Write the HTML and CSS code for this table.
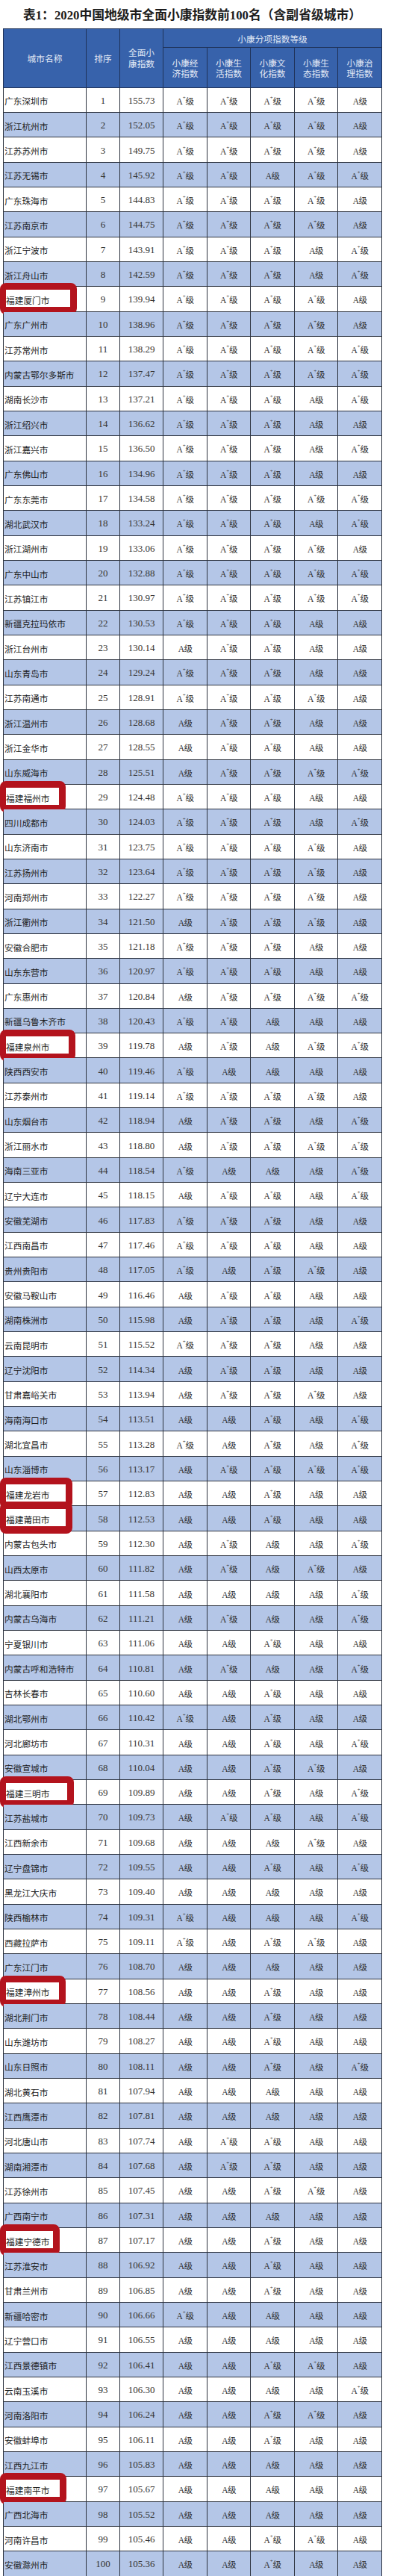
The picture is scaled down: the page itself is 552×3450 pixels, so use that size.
FILE: index.html
```html
<!DOCTYPE html>
<html lang="zh-CN">
<head>
<meta charset="utf-8">
<title>2020中国地级市全面小康指数前100名</title>
<link rel="stylesheet" href="styles.css">
</head>
<body>
<h1 class="title">表1：2020中国地级市全面小康指数前100名（含副省级城市）</h1>
<table class="rank">
<colgroup><col class="c1"><col class="c2"><col class="c3"><col class="cg"><col class="cg2"><col class="cg"><col class="cg2"><col class="cg"></colgroup>
<thead>
<tr class="h1"><th rowspan="2">城市名称</th><th rowspan="2">排序</th><th rowspan="2">全面小<br>康指数</th><th colspan="5">小康分项指数等级</th></tr>
<tr class="h2"><th>小康经<br>济指数</th><th>小康生<br>活指数</th><th>小康文<br>化指数</th><th>小康生<br>态指数</th><th>小康治<br>理指数</th></tr>
</thead>
<tbody>
<tr><td class="n">广东深圳市</td><td>1</td><td>155.73</td><td>A<sup>+</sup>级</td><td>A<sup>+</sup>级</td><td>A<sup>+</sup>级</td><td>A<sup>+</sup>级</td><td>A级</td></tr>
<tr><td class="n">浙江杭州市</td><td>2</td><td>152.05</td><td>A<sup>+</sup>级</td><td>A<sup>+</sup>级</td><td>A<sup>+</sup>级</td><td>A<sup>+</sup>级</td><td>A级</td></tr>
<tr><td class="n">江苏苏州市</td><td>3</td><td>149.75</td><td>A<sup>+</sup>级</td><td>A<sup>+</sup>级</td><td>A<sup>+</sup>级</td><td>A<sup>+</sup>级</td><td>A级</td></tr>
<tr><td class="n">江苏无锡市</td><td>4</td><td>145.92</td><td>A<sup>+</sup>级</td><td>A<sup>+</sup>级</td><td>A级</td><td>A<sup>+</sup>级</td><td>A<sup>+</sup>级</td></tr>
<tr><td class="n">广东珠海市</td><td>5</td><td>144.83</td><td>A<sup>+</sup>级</td><td>A<sup>+</sup>级</td><td>A<sup>+</sup>级</td><td>A<sup>+</sup>级</td><td>A级</td></tr>
<tr><td class="n">江苏南京市</td><td>6</td><td>144.75</td><td>A<sup>+</sup>级</td><td>A<sup>+</sup>级</td><td>A<sup>+</sup>级</td><td>A<sup>+</sup>级</td><td>A级</td></tr>
<tr><td class="n">浙江宁波市</td><td>7</td><td>143.91</td><td>A<sup>+</sup>级</td><td>A<sup>+</sup>级</td><td>A<sup>+</sup>级</td><td>A级</td><td>A<sup>+</sup>级</td></tr>
<tr><td class="n">浙江舟山市</td><td>8</td><td>142.59</td><td>A<sup>+</sup>级</td><td>A<sup>+</sup>级</td><td>A<sup>+</sup>级</td><td>A级</td><td>A<sup>+</sup>级</td></tr>
<tr><td class="n"><span class="hl w103"></span><span class="t">福建厦门市</span></td><td>9</td><td>139.94</td><td>A<sup>+</sup>级</td><td>A<sup>+</sup>级</td><td>A<sup>+</sup>级</td><td>A<sup>+</sup>级</td><td>A级</td></tr>
<tr><td class="n">广东广州市</td><td>10</td><td>138.96</td><td>A<sup>+</sup>级</td><td>A<sup>+</sup>级</td><td>A<sup>+</sup>级</td><td>A<sup>+</sup>级</td><td>A级</td></tr>
<tr><td class="n">江苏常州市</td><td>11</td><td>138.29</td><td>A<sup>+</sup>级</td><td>A<sup>+</sup>级</td><td>A<sup>+</sup>级</td><td>A<sup>+</sup>级</td><td>A<sup>+</sup>级</td></tr>
<tr><td class="n">内蒙古鄂尔多斯市</td><td>12</td><td>137.47</td><td>A<sup>+</sup>级</td><td>A<sup>+</sup>级</td><td>A<sup>+</sup>级</td><td>A<sup>+</sup>级</td><td>A<sup>+</sup>级</td></tr>
<tr><td class="n">湖南长沙市</td><td>13</td><td>137.21</td><td>A<sup>+</sup>级</td><td>A<sup>+</sup>级</td><td>A<sup>+</sup>级</td><td>A级</td><td>A<sup>+</sup>级</td></tr>
<tr><td class="n">浙江绍兴市</td><td>14</td><td>136.62</td><td>A<sup>+</sup>级</td><td>A<sup>+</sup>级</td><td>A<sup>+</sup>级</td><td>A级</td><td>A级</td></tr>
<tr><td class="n">浙江嘉兴市</td><td>15</td><td>136.50</td><td>A<sup>+</sup>级</td><td>A<sup>+</sup>级</td><td>A<sup>+</sup>级</td><td>A级</td><td>A<sup>+</sup>级</td></tr>
<tr><td class="n">广东佛山市</td><td>16</td><td>134.96</td><td>A<sup>+</sup>级</td><td>A<sup>+</sup>级</td><td>A<sup>+</sup>级</td><td>A级</td><td>A级</td></tr>
<tr><td class="n">广东东莞市</td><td>17</td><td>134.58</td><td>A<sup>+</sup>级</td><td>A<sup>+</sup>级</td><td>A<sup>+</sup>级</td><td>A<sup>+</sup>级</td><td>A<sup>+</sup>级</td></tr>
<tr><td class="n">湖北武汉市</td><td>18</td><td>133.24</td><td>A<sup>+</sup>级</td><td>A<sup>+</sup>级</td><td>A<sup>+</sup>级</td><td>A级</td><td>A<sup>+</sup>级</td></tr>
<tr><td class="n">浙江湖州市</td><td>19</td><td>133.06</td><td>A<sup>+</sup>级</td><td>A<sup>+</sup>级</td><td>A<sup>+</sup>级</td><td>A<sup>+</sup>级</td><td>A级</td></tr>
<tr><td class="n">广东中山市</td><td>20</td><td>132.88</td><td>A<sup>+</sup>级</td><td>A<sup>+</sup>级</td><td>A<sup>+</sup>级</td><td>A<sup>+</sup>级</td><td>A<sup>+</sup>级</td></tr>
<tr><td class="n">江苏镇江市</td><td>21</td><td>130.97</td><td>A<sup>+</sup>级</td><td>A<sup>+</sup>级</td><td>A<sup>+</sup>级</td><td>A<sup>+</sup>级</td><td>A<sup>+</sup>级</td></tr>
<tr><td class="n">新疆克拉玛依市</td><td>22</td><td>130.53</td><td>A<sup>+</sup>级</td><td>A<sup>+</sup>级</td><td>A<sup>+</sup>级</td><td>A级</td><td>A级</td></tr>
<tr><td class="n">浙江台州市</td><td>23</td><td>130.14</td><td>A级</td><td>A<sup>+</sup>级</td><td>A<sup>+</sup>级</td><td>A级</td><td>A级</td></tr>
<tr><td class="n">山东青岛市</td><td>24</td><td>129.24</td><td>A<sup>+</sup>级</td><td>A<sup>+</sup>级</td><td>A<sup>+</sup>级</td><td>A级</td><td>A级</td></tr>
<tr><td class="n">江苏南通市</td><td>25</td><td>128.91</td><td>A<sup>+</sup>级</td><td>A<sup>+</sup>级</td><td>A<sup>+</sup>级</td><td>A<sup>+</sup>级</td><td>A级</td></tr>
<tr><td class="n">浙江温州市</td><td>26</td><td>128.68</td><td>A级</td><td>A<sup>+</sup>级</td><td>A<sup>+</sup>级</td><td>A级</td><td>A级</td></tr>
<tr><td class="n">浙江金华市</td><td>27</td><td>128.55</td><td>A级</td><td>A<sup>+</sup>级</td><td>A<sup>+</sup>级</td><td>A级</td><td>A级</td></tr>
<tr><td class="n">山东威海市</td><td>28</td><td>125.51</td><td>A级</td><td>A<sup>+</sup>级</td><td>A<sup>+</sup>级</td><td>A<sup>+</sup>级</td><td>A<sup>+</sup>级</td></tr>
<tr><td class="n"><span class="hl w88"></span><span class="t">福建福州市</span></td><td>29</td><td>124.48</td><td>A<sup>+</sup>级</td><td>A<sup>+</sup>级</td><td>A<sup>+</sup>级</td><td>A级</td><td>A级</td></tr>
<tr><td class="n">四川成都市</td><td>30</td><td>124.03</td><td>A<sup>+</sup>级</td><td>A<sup>+</sup>级</td><td>A<sup>+</sup>级</td><td>A级</td><td>A<sup>+</sup>级</td></tr>
<tr><td class="n">山东济南市</td><td>31</td><td>123.75</td><td>A<sup>+</sup>级</td><td>A<sup>+</sup>级</td><td>A<sup>+</sup>级</td><td>A<sup>+</sup>级</td><td>A级</td></tr>
<tr><td class="n">江苏扬州市</td><td>32</td><td>123.64</td><td>A<sup>+</sup>级</td><td>A<sup>+</sup>级</td><td>A<sup>+</sup>级</td><td>A<sup>+</sup>级</td><td>A级</td></tr>
<tr><td class="n">河南郑州市</td><td>33</td><td>122.27</td><td>A<sup>+</sup>级</td><td>A<sup>+</sup>级</td><td>A<sup>+</sup>级</td><td>A<sup>+</sup>级</td><td>A级</td></tr>
<tr><td class="n">浙江衢州市</td><td>34</td><td>121.50</td><td>A级</td><td>A<sup>+</sup>级</td><td>A<sup>+</sup>级</td><td>A<sup>+</sup>级</td><td>A级</td></tr>
<tr><td class="n">安徽合肥市</td><td>35</td><td>121.18</td><td>A<sup>+</sup>级</td><td>A<sup>+</sup>级</td><td>A<sup>+</sup>级</td><td>A级</td><td>A级</td></tr>
<tr><td class="n">山东东营市</td><td>36</td><td>120.97</td><td>A<sup>+</sup>级</td><td>A<sup>+</sup>级</td><td>A<sup>+</sup>级</td><td>A级</td><td>A级</td></tr>
<tr><td class="n">广东惠州市</td><td>37</td><td>120.84</td><td>A级</td><td>A<sup>+</sup>级</td><td>A<sup>+</sup>级</td><td>A<sup>+</sup>级</td><td>A<sup>+</sup>级</td></tr>
<tr><td class="n">新疆乌鲁木齐市</td><td>38</td><td>120.43</td><td>A<sup>+</sup>级</td><td>A<sup>+</sup>级</td><td>A级</td><td>A级</td><td>A级</td></tr>
<tr><td class="n"><span class="hl w101"></span><span class="t">福建泉州市</span></td><td>39</td><td>119.78</td><td>A级</td><td>A<sup>+</sup>级</td><td>A级</td><td>A<sup>+</sup>级</td><td>A<sup>+</sup>级</td></tr>
<tr><td class="n">陕西西安市</td><td>40</td><td>119.46</td><td>A<sup>+</sup>级</td><td>A级</td><td>A级</td><td>A级</td><td>A级</td></tr>
<tr><td class="n">江苏泰州市</td><td>41</td><td>119.14</td><td>A<sup>+</sup>级</td><td>A<sup>+</sup>级</td><td>A<sup>+</sup>级</td><td>A<sup>+</sup>级</td><td>A级</td></tr>
<tr><td class="n">山东烟台市</td><td>42</td><td>118.94</td><td>A级</td><td>A<sup>+</sup>级</td><td>A<sup>+</sup>级</td><td>A级</td><td>A<sup>+</sup>级</td></tr>
<tr><td class="n">浙江丽水市</td><td>43</td><td>118.80</td><td>A级</td><td>A<sup>+</sup>级</td><td>A<sup>+</sup>级</td><td>A<sup>+</sup>级</td><td>A<sup>+</sup>级</td></tr>
<tr><td class="n">海南三亚市</td><td>44</td><td>118.54</td><td>A<sup>+</sup>级</td><td>A级</td><td>A级</td><td>A级</td><td>A<sup>+</sup>级</td></tr>
<tr><td class="n">辽宁大连市</td><td>45</td><td>118.15</td><td>A级</td><td>A<sup>+</sup>级</td><td>A<sup>+</sup>级</td><td>A级</td><td>A<sup>+</sup>级</td></tr>
<tr><td class="n">安徽芜湖市</td><td>46</td><td>117.83</td><td>A<sup>+</sup>级</td><td>A<sup>+</sup>级</td><td>A<sup>+</sup>级</td><td>A级</td><td>A级</td></tr>
<tr><td class="n">江西南昌市</td><td>47</td><td>117.46</td><td>A<sup>+</sup>级</td><td>A<sup>+</sup>级</td><td>A<sup>+</sup>级</td><td>A级</td><td>A级</td></tr>
<tr><td class="n">贵州贵阳市</td><td>48</td><td>117.05</td><td>A<sup>+</sup>级</td><td>A级</td><td>A<sup>+</sup>级</td><td>A<sup>+</sup>级</td><td>A级</td></tr>
<tr><td class="n">安徽马鞍山市</td><td>49</td><td>116.46</td><td>A级</td><td>A<sup>+</sup>级</td><td>A<sup>+</sup>级</td><td>A级</td><td>A级</td></tr>
<tr><td class="n">湖南株洲市</td><td>50</td><td>115.98</td><td>A级</td><td>A<sup>+</sup>级</td><td>A<sup>+</sup>级</td><td>A级</td><td>A<sup>+</sup>级</td></tr>
<tr><td class="n">云南昆明市</td><td>51</td><td>115.52</td><td>A<sup>+</sup>级</td><td>A<sup>+</sup>级</td><td>A<sup>+</sup>级</td><td>A级</td><td>A级</td></tr>
<tr><td class="n">辽宁沈阳市</td><td>52</td><td>114.34</td><td>A级</td><td>A<sup>+</sup>级</td><td>A<sup>+</sup>级</td><td>A级</td><td>A级</td></tr>
<tr><td class="n">甘肃嘉峪关市</td><td>53</td><td>113.94</td><td>A级</td><td>A<sup>+</sup>级</td><td>A<sup>+</sup>级</td><td>A<sup>+</sup>级</td><td>A级</td></tr>
<tr><td class="n">海南海口市</td><td>54</td><td>113.51</td><td>A级</td><td>A级</td><td>A<sup>+</sup>级</td><td>A级</td><td>A<sup>+</sup>级</td></tr>
<tr><td class="n">湖北宜昌市</td><td>55</td><td>113.28</td><td>A<sup>+</sup>级</td><td>A级</td><td>A<sup>+</sup>级</td><td>A级</td><td>A<sup>+</sup>级</td></tr>
<tr><td class="n">山东淄博市</td><td>56</td><td>113.17</td><td>A级</td><td>A<sup>+</sup>级</td><td>A<sup>+</sup>级</td><td>A<sup>+</sup>级</td><td>A<sup>+</sup>级</td></tr>
<tr><td class="n"><span class="hl w97"></span><span class="t">福建龙岩市</span></td><td>57</td><td>112.83</td><td>A级</td><td>A级</td><td>A<sup>+</sup>级</td><td>A级</td><td>A级</td></tr>
<tr><td class="n"><span class="hl w97"></span><span class="t">福建莆田市</span></td><td>58</td><td>112.53</td><td>A级</td><td>A级</td><td>A<sup>+</sup>级</td><td>A级</td><td>A级</td></tr>
<tr><td class="n">内蒙古包头市</td><td>59</td><td>112.30</td><td>A级</td><td>A<sup>+</sup>级</td><td>A级</td><td>A级</td><td>A<sup>+</sup>级</td></tr>
<tr><td class="n">山西太原市</td><td>60</td><td>111.82</td><td>A级</td><td>A<sup>+</sup>级</td><td>A级</td><td>A<sup>+</sup>级</td><td>A级</td></tr>
<tr><td class="n">湖北襄阳市</td><td>61</td><td>111.58</td><td>A级</td><td>A级</td><td>A级</td><td>A级</td><td>A<sup>+</sup>级</td></tr>
<tr><td class="n">内蒙古乌海市</td><td>62</td><td>111.21</td><td>A级</td><td>A<sup>+</sup>级</td><td>A级</td><td>A级</td><td>A<sup>+</sup>级</td></tr>
<tr><td class="n">宁夏银川市</td><td>63</td><td>111.06</td><td>A级</td><td>A级</td><td>A<sup>+</sup>级</td><td>A级</td><td>A级</td></tr>
<tr><td class="n">内蒙古呼和浩特市</td><td>64</td><td>110.81</td><td>A级</td><td>A<sup>+</sup>级</td><td>A级</td><td>A级</td><td>A<sup>+</sup>级</td></tr>
<tr><td class="n">吉林长春市</td><td>65</td><td>110.60</td><td>A级</td><td>A级</td><td>A<sup>+</sup>级</td><td>A级</td><td>A级</td></tr>
<tr><td class="n">湖北鄂州市</td><td>66</td><td>110.42</td><td>A<sup>+</sup>级</td><td>A级</td><td>A<sup>+</sup>级</td><td>A级</td><td>A级</td></tr>
<tr><td class="n">河北廊坊市</td><td>67</td><td>110.31</td><td>A级</td><td>A级</td><td>A<sup>+</sup>级</td><td>A级</td><td>A<sup>+</sup>级</td></tr>
<tr><td class="n">安徽宣城市</td><td>68</td><td>110.04</td><td>A级</td><td>A级</td><td>A<sup>+</sup>级</td><td>A<sup>+</sup>级</td><td>A级</td></tr>
<tr><td class="n"><span class="hl w99"></span><span class="t">福建三明市</span></td><td>69</td><td>109.89</td><td>A级</td><td>A级</td><td>A<sup>+</sup>级</td><td>A级</td><td>A<sup>+</sup>级</td></tr>
<tr><td class="n">江苏盐城市</td><td>70</td><td>109.73</td><td>A级</td><td>A<sup>+</sup>级</td><td>A<sup>+</sup>级</td><td>A级</td><td>A<sup>+</sup>级</td></tr>
<tr><td class="n">江西新余市</td><td>71</td><td>109.68</td><td>A级</td><td>A级</td><td>A级</td><td>A<sup>+</sup>级</td><td>A级</td></tr>
<tr><td class="n">辽宁盘锦市</td><td>72</td><td>109.55</td><td>A级</td><td>A级</td><td>A<sup>+</sup>级</td><td>A级</td><td>A<sup>+</sup>级</td></tr>
<tr><td class="n">黑龙江大庆市</td><td>73</td><td>109.40</td><td>A级</td><td>A级</td><td>A级</td><td>A级</td><td>A级</td></tr>
<tr><td class="n">陕西榆林市</td><td>74</td><td>109.31</td><td>A<sup>+</sup>级</td><td>A级</td><td>A级</td><td>A级</td><td>A<sup>+</sup>级</td></tr>
<tr><td class="n">西藏拉萨市</td><td>75</td><td>109.11</td><td>A<sup>+</sup>级</td><td>A级</td><td>A<sup>+</sup>级</td><td>A<sup>+</sup>级</td><td>A级</td></tr>
<tr><td class="n">广东江门市</td><td>76</td><td>108.70</td><td>A级</td><td>A级</td><td>A级</td><td>A级</td><td>A级</td></tr>
<tr><td class="n"><span class="hl w88"></span><span class="t">福建漳州市</span></td><td>77</td><td>108.56</td><td>A级</td><td>A级</td><td>A<sup>+</sup>级</td><td>A级</td><td>A级</td></tr>
<tr><td class="n">湖北荆门市</td><td>78</td><td>108.44</td><td>A级</td><td>A级</td><td>A<sup>+</sup>级</td><td>A级</td><td>A级</td></tr>
<tr><td class="n">山东潍坊市</td><td>79</td><td>108.27</td><td>A级</td><td>A级</td><td>A<sup>+</sup>级</td><td>A级</td><td>A级</td></tr>
<tr><td class="n">山东日照市</td><td>80</td><td>108.11</td><td>A级</td><td>A级</td><td>A<sup>+</sup>级</td><td>A级</td><td>A<sup>+</sup>级</td></tr>
<tr><td class="n">湖北黄石市</td><td>81</td><td>107.94</td><td>A级</td><td>A级</td><td>A级</td><td>A级</td><td>A级</td></tr>
<tr><td class="n">江西鹰潭市</td><td>82</td><td>107.81</td><td>A级</td><td>A级</td><td>A级</td><td>A级</td><td>A级</td></tr>
<tr><td class="n">河北唐山市</td><td>83</td><td>107.74</td><td>A级</td><td>A<sup>+</sup>级</td><td>A<sup>+</sup>级</td><td>A级</td><td>A级</td></tr>
<tr><td class="n">湖南湘潭市</td><td>84</td><td>107.68</td><td>A级</td><td>A<sup>+</sup>级</td><td>A<sup>+</sup>级</td><td>A级</td><td>A级</td></tr>
<tr><td class="n">江苏徐州市</td><td>85</td><td>107.45</td><td>A级</td><td>A级</td><td>A<sup>+</sup>级</td><td>A<sup>+</sup>级</td><td>A级</td></tr>
<tr><td class="n">广西南宁市</td><td>86</td><td>107.31</td><td>A级</td><td>A级</td><td>A级</td><td>A级</td><td>A级</td></tr>
<tr><td class="n"><span class="hl w80"></span><span class="t">福建宁德市</span></td><td>87</td><td>107.17</td><td>A级</td><td>A级</td><td>A<sup>+</sup>级</td><td>A级</td><td>A级</td></tr>
<tr><td class="n">江苏淮安市</td><td>88</td><td>106.92</td><td>A级</td><td>A级</td><td>A<sup>+</sup>级</td><td>A级</td><td>A级</td></tr>
<tr><td class="n">甘肃兰州市</td><td>89</td><td>106.85</td><td>A级</td><td>A级</td><td>A<sup>+</sup>级</td><td>A级</td><td>A级</td></tr>
<tr><td class="n">新疆哈密市</td><td>90</td><td>106.66</td><td>A<sup>+</sup>级</td><td>A级</td><td>A级</td><td>A级</td><td>A级</td></tr>
<tr><td class="n">辽宁营口市</td><td>91</td><td>106.55</td><td>A级</td><td>A级</td><td>A级</td><td>A级</td><td>A级</td></tr>
<tr><td class="n">江西景德镇市</td><td>92</td><td>106.41</td><td>A级</td><td>A级</td><td>A<sup>+</sup>级</td><td>A<sup>+</sup>级</td><td>A级</td></tr>
<tr><td class="n">云南玉溪市</td><td>93</td><td>106.30</td><td>A级</td><td>A级</td><td>A级</td><td>A级</td><td>A<sup>+</sup>级</td></tr>
<tr><td class="n">河南洛阳市</td><td>94</td><td>106.24</td><td>A级</td><td>A级</td><td>A<sup>+</sup>级</td><td>A<sup>+</sup>级</td><td>A级</td></tr>
<tr><td class="n">安徽蚌埠市</td><td>95</td><td>106.11</td><td>A级</td><td>A级</td><td>A<sup>+</sup>级</td><td>A级</td><td>A级</td></tr>
<tr><td class="n">江西九江市</td><td>96</td><td>105.83</td><td>A级</td><td>A级</td><td>A级</td><td>A级</td><td>A级</td></tr>
<tr><td class="n"><span class="hl w89"></span><span class="t">福建南平市</span></td><td>97</td><td>105.67</td><td>A级</td><td>A级</td><td>A级</td><td>A级</td><td>A级</td></tr>
<tr><td class="n">广西北海市</td><td>98</td><td>105.52</td><td>A级</td><td>A级</td><td>A级</td><td>A级</td><td>A级</td></tr>
<tr><td class="n">河南许昌市</td><td>99</td><td>105.46</td><td>A级</td><td>A级</td><td>A<sup>+</sup>级</td><td>A<sup>+</sup>级</td><td>A级</td></tr>
<tr><td class="n">安徽滁州市</td><td>100</td><td>105.36</td><td>A级</td><td>A级</td><td>A<sup>+</sup>级</td><td>A级</td><td>A级</td></tr>
</tbody>
</table>
</body>
</html>
```

FILE: styles.css
```css
html, body {
  margin: 0;
  padding: 0;
  background: #fff;
}

body {
  font-family: "Noto Sans CJK SC", sans-serif;
  color: #1e1e1e;
}

.title {
  margin: 0;
  width: 515px;
  height: 38px;
  box-sizing: border-box;
  padding-top: 4px;
  line-height: 34px;
  text-align: center;
  font-family: "Liberation Serif", "Noto Sans CJK SC", serif;
  font-weight: bold;
  font-size: 16.8px;
  color: #1c1c1c;
  white-space: nowrap;
}

.rank {
  border-collapse: collapse;
  table-layout: fixed;
  width: 507px;
  margin-left: 4px;
}

.c1 { width: 111px; }
.c2 { width: 45px; }
.c3 { width: 58px; }
.cg { width: 59px; }
.cg2 { width: 58px; }

.rank th {
  background: #3762ab;
  color: #e3eaf6;
  font-weight: normal;
  font-size: 11.7px;
  line-height: 14.5px;
  padding: 0;
  border: 1px solid #1f3258;
  text-align: center;
  vertical-align: middle;
}

.rank .h1 { height: 25.3px; }
.rank .h1 th[colspan] { padding-top: 3px; }
.rank .h2 { height: 53.4px; }
.rank .h2 th { padding-top: 2px; }

.rank td {
  border: 1px solid #2c323e;
  padding: 2px 0 0 0;
  text-align: center;
  vertical-align: middle;
  font-family: "Liberation Serif", "Noto Sans CJK SC", serif;
  font-size: 13px;
  color: #333;
  white-space: nowrap;
}

.rank tbody tr { height: 33.33px; }
.rank tbody tr:nth-child(even) td { background: #b4c6e7; }

.rank td.n {
  position: relative;
  text-align: left;
  padding-left: 1px;
  font-family: "Noto Sans CJK SC", sans-serif;
  font-size: 11.7px;
  color: #1e1e1e;
}

.rank td:nth-child(n+4) {
  font-family: "Liberation Serif", "Noto Sans CJK SC", serif;
  font-size: 11.5px;
  letter-spacing: -0.6px;
  color: #2e2e2e;
}

.rank sup {
  font-size: 7px;
  line-height: 1;
  vertical-align: top;
  position: relative;
  top: 1px;
  margin: 0 0.5px;
}

.hl {
  position: absolute;
  left: -5px;
  top: -5px;
  height: 23px;
  border-style: solid;
  border-color: #b3131d;
  border-width: 9px 9px 10px 8px;
  border-radius: 8px;
  background: #fff;
}

.w80 { width: 63px; }
.w88 { width: 71px; }
.w89 { width: 72px; }
.w97 { width: 80px; }
.w99 { width: 82px; }
.w101 { width: 84px; }
.w103 { width: 86px; }

.t {
  position: relative;
  padding-left: 2px;
}
```
